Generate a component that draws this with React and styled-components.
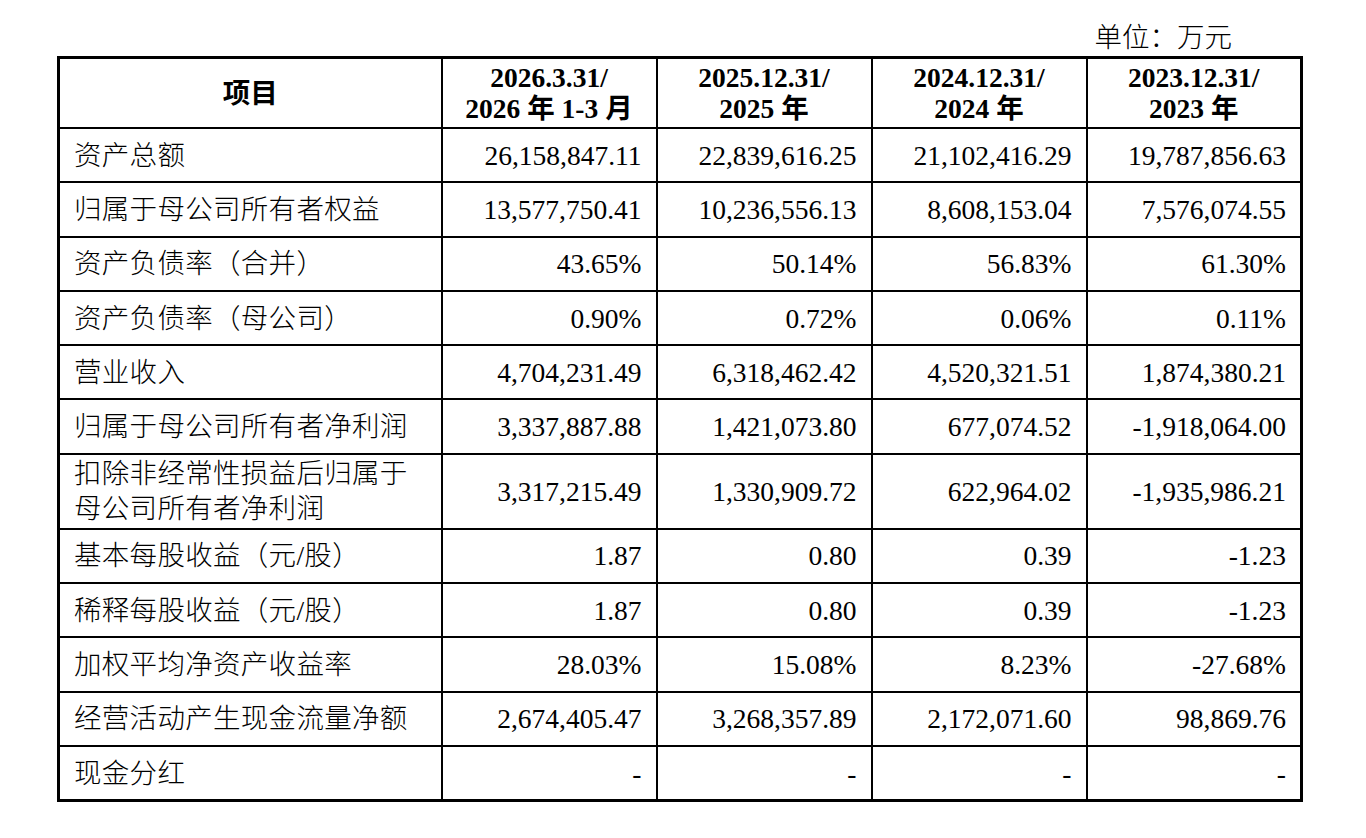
import React from 'react';
import styled, { createGlobalStyle } from 'styled-components';

const GlobalStyle = createGlobalStyle`
    html, body {
        margin: 0;
        padding: 0;
        background: #fff;
    }
    body {
        font-family: "Liberation Serif", "Noto Sans CJK SC", serif;
        color: #000;
    }
`;

const Page = styled.div`
    width: 1366px;
    height: 838px;
    padding: 20px 0 0 57px;
    box-sizing: border-box;
`;

const Unit = styled.div`
    width: 1243px;
    box-sizing: border-box;
    text-align: right;
    padding-right: 68px;
    font-size: 27.5px;
    line-height: 36px;
    height: 36px;
    font-weight: 300;
`;

const Table = styled.table`
    width: 1243px;
    table-layout: fixed;
    border-collapse: collapse;
    border: 3px solid #000;
    font-size: 27.5px;
`;

const Col = styled.col`
    width: ${(p) => p.$w}px;
`;

const Th = styled.th`
    border: 2px solid #000;
    height: 68px;
    padding: 0;
    text-align: center;
    font-weight: 700;
    line-height: 31px;
`;

const Td = styled.td`
    border: 2px solid #000;
    height: ${(p) => (p.$tall ? 73 : 52.3)}px;
    padding: 0 14px;
    line-height: 35px;
    text-align: ${(p) => (p.$label ? 'left' : 'right')};
    font-weight: ${(p) => (p.$label ? 300 : 400)};
    white-space: nowrap;
    vertical-align: middle;
`;

const Label = styled.span`
    display: block;
    letter-spacing: 0.3px;
    white-space: normal;
`;

const colWidths = [383, 215, 215, 215, 215];

const headers = [
    ['2026.3.31/', '2026 年 1-3 月'],
    ['2025.12.31/', '2025 年'],
    ['2024.12.31/', '2024 年'],
    ['2023.12.31/', '2023 年'],
];

const rows = [
    ['资产总额', '26,158,847.11', '22,839,616.25', '21,102,416.29', '19,787,856.63'],
    ['归属于母公司所有者权益', '13,577,750.41', '10,236,556.13', '8,608,153.04', '7,576,074.55'],
    ['资产负债率（合并）', '43.65%', '50.14%', '56.83%', '61.30%'],
    ['资产负债率（母公司）', '0.90%', '0.72%', '0.06%', '0.11%'],
    ['营业收入', '4,704,231.49', '6,318,462.42', '4,520,321.51', '1,874,380.21'],
    ['归属于母公司所有者净利润', '3,337,887.88', '1,421,073.80', '677,074.52', '-1,918,064.00'],
    [['扣除非经常性损益后归属于', '母公司所有者净利润'], '3,317,215.49', '1,330,909.72', '622,964.02', '-1,935,986.21'],
    ['基本每股收益（元/股）', '1.87', '0.80', '0.39', '-1.23'],
    ['稀释每股收益（元/股）', '1.87', '0.80', '0.39', '-1.23'],
    ['加权平均净资产收益率', '28.03%', '15.08%', '8.23%', '-27.68%'],
    ['经营活动产生现金流量净额', '2,674,405.47', '3,268,357.89', '2,172,071.60', '98,869.76'],
    ['现金分红', '-', '-', '-', '-'],
];

const App = () => {
    return (
        <Page>
            <GlobalStyle />
            <Unit>单位：万元</Unit>
            <Table>
                <colgroup>
                    {colWidths.map((w, i) => (
                        <Col key={i} $w={w} />
                    ))}
                </colgroup>
                <thead>
                    <tr>
                        <Th>项目</Th>
                        {headers.map((h) => (
                            <Th key={h[0]}>
                                {h[0]}
                                <br />
                                {h[1]}
                            </Th>
                        ))}
                    </tr>
                </thead>
                <tbody>
                    {rows.map((r, i) => {
                        const tall = Array.isArray(r[0]);
                        return (
                            <tr key={i}>
                                <Td $label $tall={tall}>
                                    {tall ? (
                                        r[0].map((line) => <Label key={line}>{line}</Label>)
                                    ) : (
                                        <Label>{r[0]}</Label>
                                    )}
                                </Td>
                                {r.slice(1).map((v, j) => (
                                    <Td key={j} $tall={tall}>
                                        {v}
                                    </Td>
                                ))}
                            </tr>
                        );
                    })}
                </tbody>
            </Table>
        </Page>
    );
};

export default App;
